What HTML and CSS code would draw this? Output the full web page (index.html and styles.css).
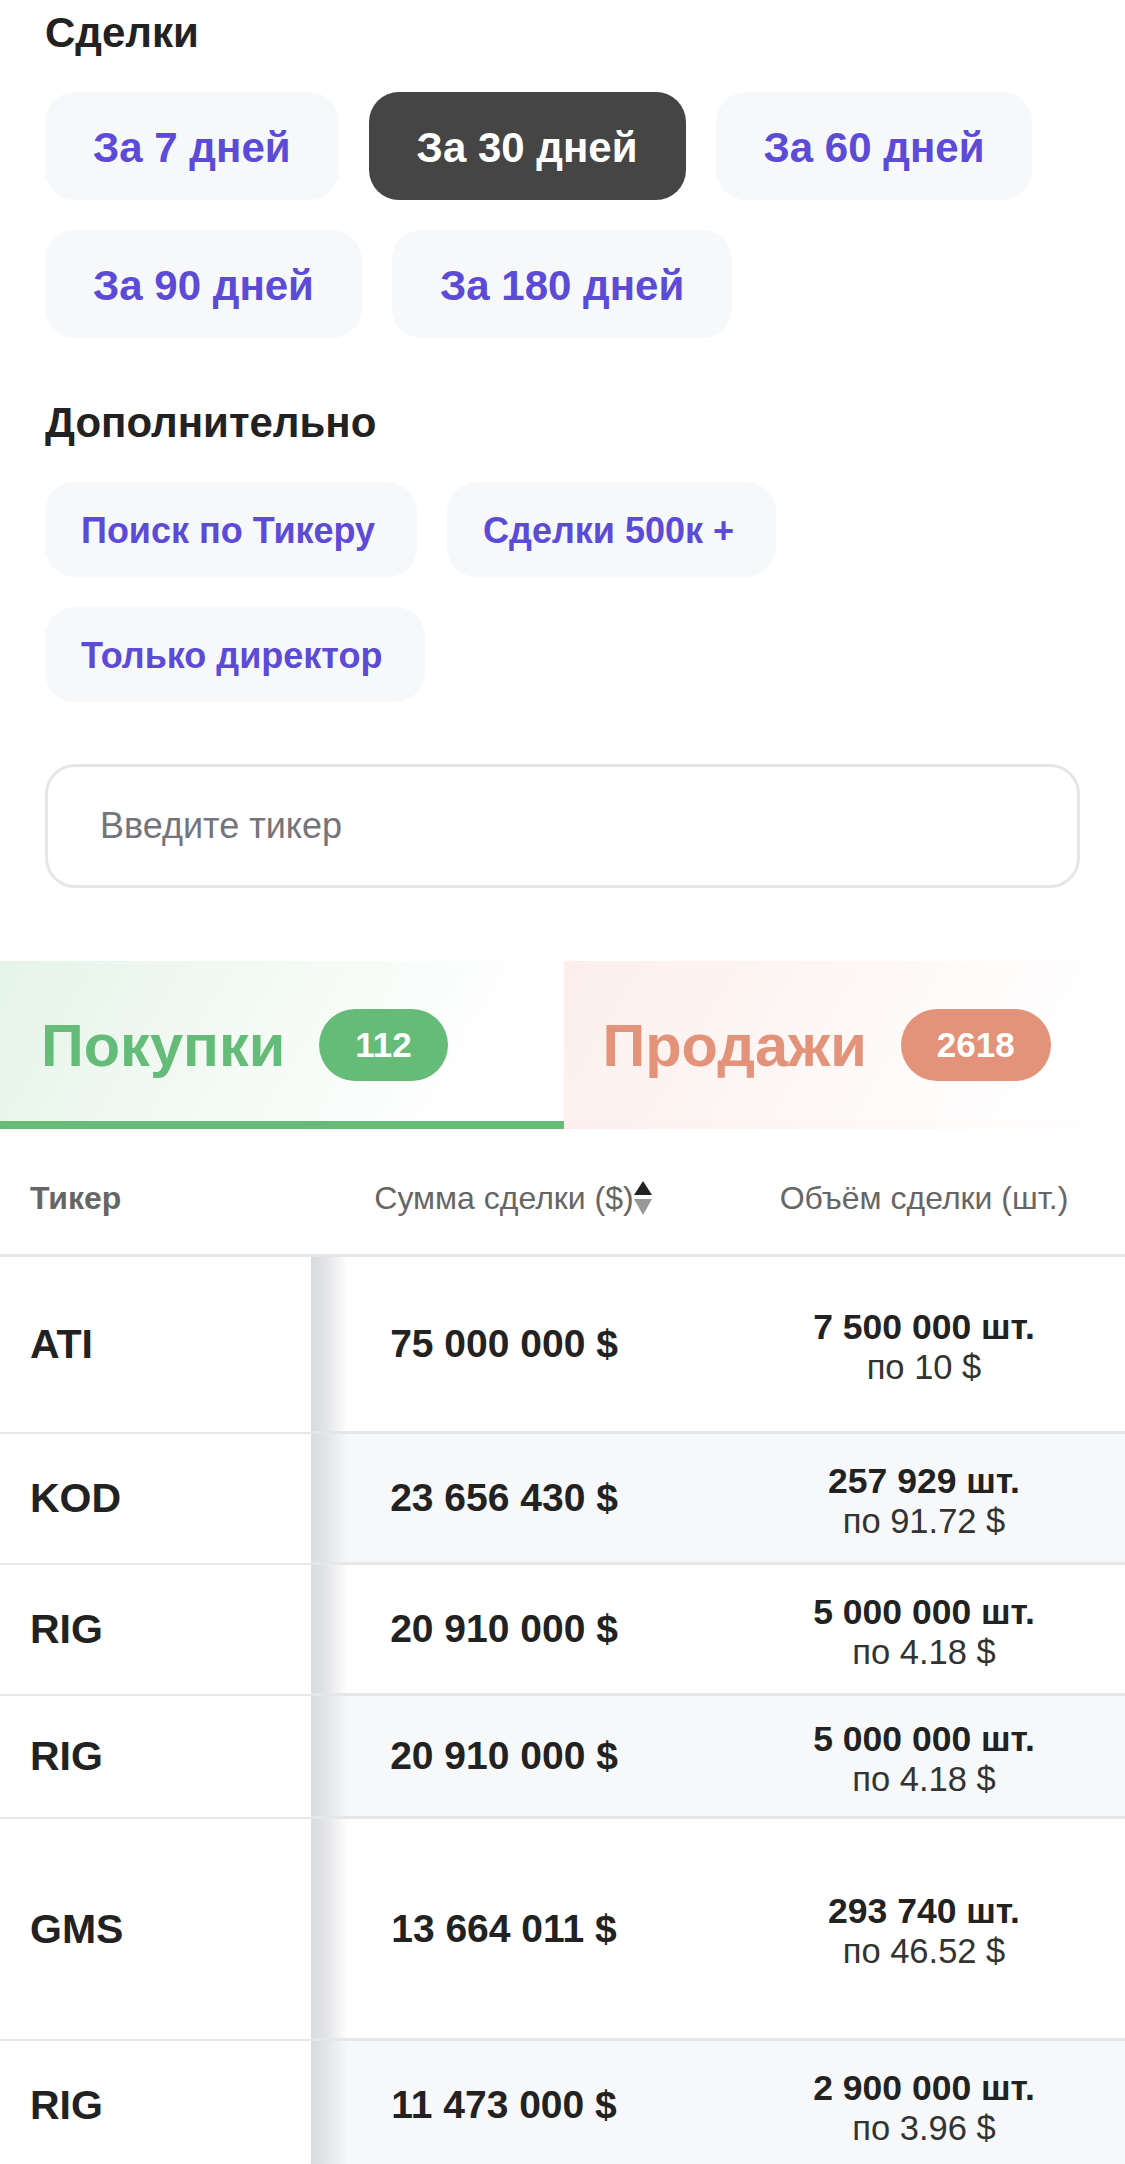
FILE: index.html
```html
<!DOCTYPE html>
<html lang="ru">
<head>
    <meta charset="UTF-8">
    <title>Сделки инсайдеров</title>
    <link rel="stylesheet" href="styles.css">
</head>
<body>
    <!-- Filters -->
    <div class="filters">
        <h2 class="filters-title">Сделки</h2>
        <div class="chips">
            <button class="chip chip-lg">За 7 дней</button>
            <button class="chip chip-lg active">За 30 дней</button>
            <button class="chip chip-lg">За 60 дней</button>
            <button class="chip chip-lg">За 90 дней</button>
            <button class="chip chip-lg">За 180 дней</button>
        </div>

        <h2 class="filters-title">Дополнительно</h2>
        <div class="chips">
            <button class="chip">Поиск по Тикеру</button>
            <button class="chip">Сделки 500к +</button>
            <button class="chip">Только директор</button>
        </div>

        <input type="text" class="ticker-input" placeholder="Введите тикер">
    </div>

    <!-- Buy / Sell tabs -->
    <div class="tabs">
        <div class="tab tab-buy active">
            <span class="tab-title">Покупки</span>
            <span class="tab-count">112</span>
        </div>
        <div class="tab tab-sell">
            <span class="tab-title">Продажи</span>
            <span class="tab-count">2618</span>
        </div>
    </div>

    <!-- Deals table -->
    <table class="deals">
        <thead>
            <tr>
                <th class="col-ticker">Тикер</th>
                <th class="col-sum">
                    <span class="sortable">Сумма сделки ($)<svg class="sort-icon" width="18" height="34" viewBox="0 0 18 34"><polygon points="0,14 9,0 18,14" fill="#222"/><polygon points="0,18 18,18 9,34" fill="#999"/></svg></span>
                </th>
                <th class="col-volume">Объём сделки (шт.)</th>
            </tr>
        </thead>
        <tbody>
            <tr class="row-xl">
                <td class="col-ticker">ATI</td>
                <td class="col-sum">75 000 000 $</td>
                <td class="col-volume"><b>7 500 000 шт.</b><span>по 10 $</span></td>
            </tr>
            <tr class="row-md">
                <td class="col-ticker">KOD</td>
                <td class="col-sum">23 656 430 $</td>
                <td class="col-volume"><b>257 929 шт.</b><span>по 91.72 $</span></td>
            </tr>
            <tr class="row-md">
                <td class="col-ticker">RIG</td>
                <td class="col-sum">20 910 000 $</td>
                <td class="col-volume"><b>5 000 000 шт.</b><span>по 4.18 $</span></td>
            </tr>
            <tr class="row-sm">
                <td class="col-ticker">RIG</td>
                <td class="col-sum">20 910 000 $</td>
                <td class="col-volume"><b>5 000 000 шт.</b><span>по 4.18 $</span></td>
            </tr>
            <tr class="row-xxl">
                <td class="col-ticker">GMS</td>
                <td class="col-sum">13 664 011 $</td>
                <td class="col-volume"><b>293 740 шт.</b><span>по 46.52 $</span></td>
            </tr>
            <tr class="row-md">
                <td class="col-ticker">RIG</td>
                <td class="col-sum">11 473 000 $</td>
                <td class="col-volume"><b>2 900 000 шт.</b><span>по 3.96 $</span></td>
            </tr>
        </tbody>
    </table>
</body>
</html>
```

FILE: styles.css
```css
/* General */
body {
    margin: 0;
    font-family: 'Liberation Sans', Arial, sans-serif;
    color: #222;
    background: #fff;
    overflow-x: hidden;
}

/* Filters */
.filters {
    padding: 9px 45px 0;
}

.filters-title {
    margin: 0 0 35px;
    font-size: 42px;
    line-height: 48px;
    font-weight: 700;
    color: #222;
}

.chips + .filters-title {
    margin-top: 61px;
}

.chips {
    display: flex;
    flex-wrap: wrap;
    gap: 30px;
}

.chip {
    padding: 28px 42px 26px 36px;
    border: none;
    border-radius: 30px;
    background: #f7f8fa;
    color: #5b4bd6;
    font-family: inherit;
    font-size: 36px;
    line-height: 41px;
    font-weight: 700;
}

.chip-lg {
    padding: 32px 48px 28px;
    font-size: 42px;
    line-height: 48px;
}

.chip.active {
    background: #454545;
    color: #fff;
}

/* Ticker input */
.ticker-input {
    display: block;
    box-sizing: border-box;
    width: 100%;
    height: 124px;
    margin-top: 62px;
    padding: 0 52px;
    border: 3px solid #e6e6e6;
    border-radius: 30px;
    font-family: inherit;
    font-size: 36px;
    color: #222;
    outline: none;
}

.ticker-input::placeholder {
    color: #74747c;
}

/* Tabs */
.tabs {
    display: flex;
    margin-top: 73px;
}

.tab {
    flex: 1;
    display: flex;
    align-items: center;
    gap: 34px;
    box-sizing: border-box;
    height: 168px;
    padding: 8px 0 0 41px;
    border-bottom: 8px solid transparent;
}

.tab-title {
    font-size: 59.5px;
    font-weight: 700;
}

.tab-count {
    height: 72px;
    padding: 0 36px;
    border-radius: 36px;
    color: #fff;
    font-size: 35px;
    font-weight: 700;
    line-height: 72px;
}

.tab-buy {
    background: linear-gradient(120deg, #e5f4e8 0%, #f4faf5 45%, #fff 85%);
}

.tab-buy.active {
    border-bottom-color: #65bc79;
}

.tab-buy .tab-title {
    color: #65bc79;
}

.tab-buy .tab-count {
    background: #65bc79;
}

.tab-sell {
    padding-left: 39px;
    background: linear-gradient(120deg, #fcefeb 0%, #fdf7f5 45%, #fff 85%);
}

.tab-sell .tab-title {
    color: #e2937a;
}

.tab-sell .tab-count {
    background: #e2937a;
}

/* Deals table */
.deals {
    width: 100%;
    border-collapse: separate;
    border-spacing: 0;
    table-layout: fixed;
}

.deals th,
.deals td {
    padding: 0;
    vertical-align: middle;
    border-bottom: 3px solid #e5e6e8;
}

.deals thead tr {
    height: 128px;
}

.deals th {
    padding-top: 14px;
    font-size: 32px;
    font-weight: 400;
    color: #666;
}

.deals th.col-ticker {
    font-weight: 700;
}

.col-ticker {
    width: 311px;
    padding-left: 30px !important;
    box-sizing: border-box;
    text-align: left;
}

.col-sum {
    width: 386px;
    text-align: center;
}

.col-volume {
    padding-left: 26px !important;
    text-align: center;
}

.deals td.col-volume {
    padding-top: 5px;
}

.sortable {
    position: relative;
}

.sort-icon {
    position: absolute;
    right: -18px;
    top: 1px;
}

.deals td.col-ticker {
    font-size: 41px;
    font-weight: 700;
    border-bottom: 2px solid #e8e8e8;
    background: #fff;
}

.deals td.col-sum {
    font-size: 39px;
    font-weight: 700;
    background: linear-gradient(to right, #dadbde 0, #e2e3e6 14px, rgba(255, 255, 255, 0) 37px) no-repeat;
    background-size: 37px 100%;
}

.deals tbody tr:nth-child(even) td.col-sum {
    background-color: #f7f8fa;
}

.deals tbody tr:nth-child(even) td.col-volume {
    background: #f7f8fa;
}

.col-volume b {
    display: block;
    font-size: 35.5px;
    line-height: 40px;
}

.col-volume span {
    display: block;
    font-size: 34.5px;
    line-height: 40px;
    color: #333;
}

.row-sm { height: 123px; }
.row-md { height: 131px; }
.row-xl { height: 177px; }
.row-xxl { height: 222px; }
```
